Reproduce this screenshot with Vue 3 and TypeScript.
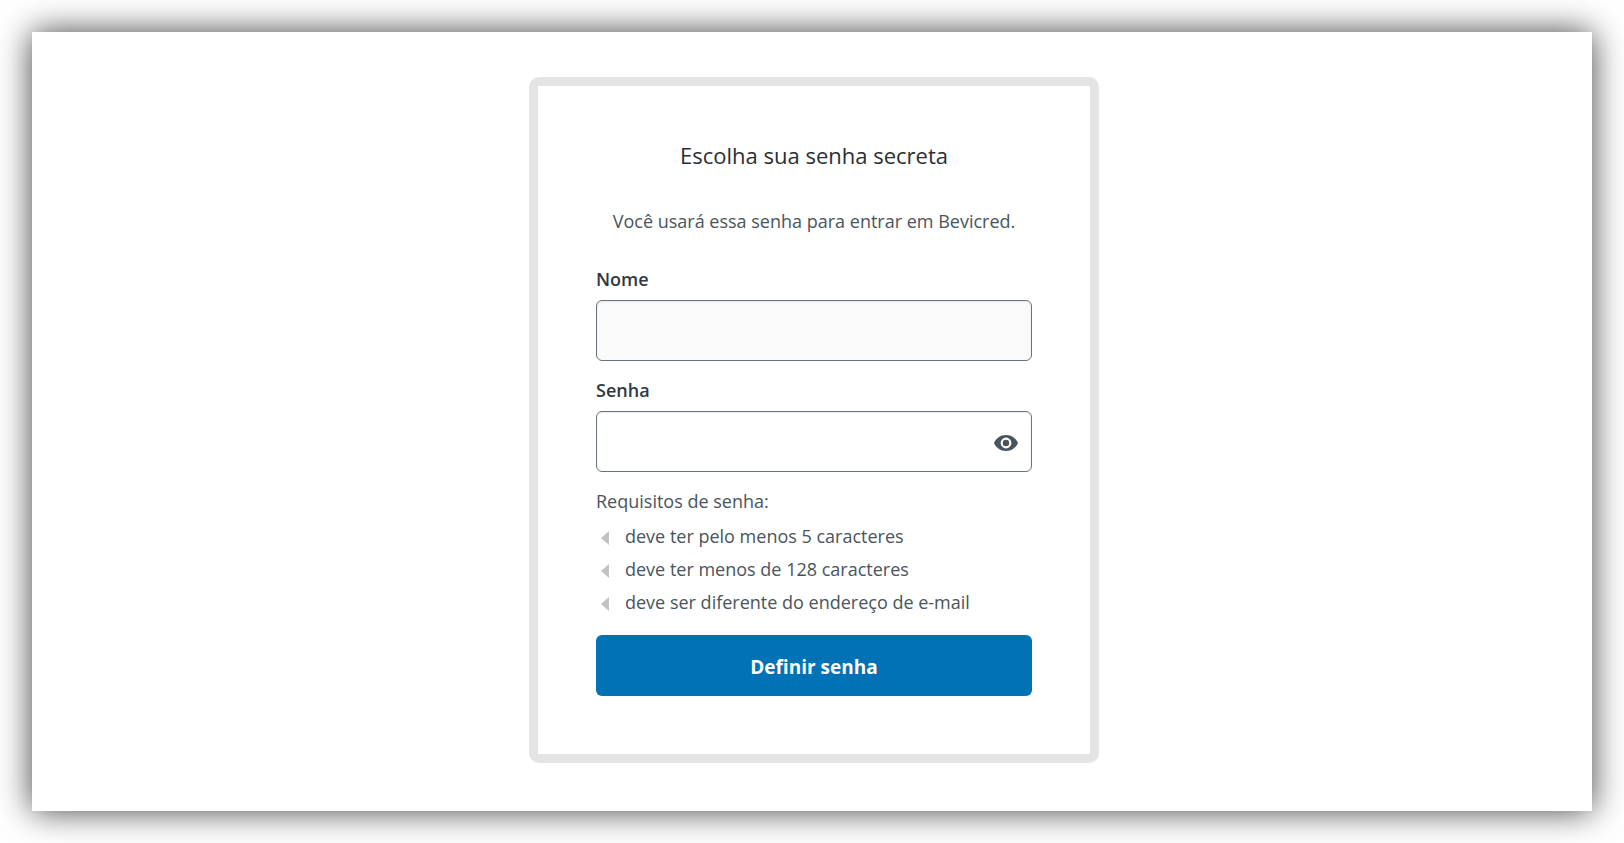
<script setup lang="ts">
import { ref } from 'vue'

const name = ref('')
const password = ref('')
const visible = ref(false)

const requirements: string[] = [
  'deve ter pelo menos 5 caracteres',
  'deve ter menos de 128 caracteres',
  'deve ser diferente do endereço de e-mail',
]
</script>

<template>
  <div class="page">
    <main class="panel">
      <form class="card" @submit.prevent>
        <h1 class="title">Escolha sua senha secreta</h1>
        <p class="intro">Você usará essa senha para entrar em Bevicred.</p>

        <div class="field">
          <label for="name">Nome</label>
          <input id="name" v-model="name" class="filled" type="text" autocomplete="name" />
        </div>

        <div class="field">
          <label for="password">Senha</label>
          <div class="control">
            <input
              id="password"
              v-model="password"
              :type="visible ? 'text' : 'password'"
              autocomplete="new-password"
            />
            <button class="toggle" type="button" aria-label="Mostrar senha" @click="visible = !visible">
              <svg viewBox="0 0 24 16" width="24" height="16" aria-hidden="true">
                <path
                  fill-rule="evenodd"
                  d="M12 0C6.5 0 1.9 3.3 0 8c1.9 4.7 6.5 8 12 8s10.1-3.3 12-8C22.1 3.3 17.5 0 12 0Zm0 13.400a5.400 5.400 0 1 1 0-10.800 5.400 5.400 0 0 1 0 10.800Zm0-8.600a3.200 3.200 0 1 0 0 6.400 3.200 3.200 0 0 0 0-6.400Z"
                />
              </svg>
            </button>
          </div>
        </div>

        <p class="rules-title">Requisitos de senha:</p>
        <ul class="rules">
          <li v-for="rule in requirements" :key="rule">
            <svg viewBox="0 0 8 14" width="8" height="14" aria-hidden="true"><path d="M8 0v14L0 7Z" /></svg>
            <span>{{ rule }}</span>
          </li>
        </ul>

        <button class="submit" type="submit">Definir senha</button>
      </form>
    </main>
  </div>
</template>

<style>
body {
  margin: 0;
  background: #fff;
}
</style>

<style scoped>
.page {
  box-sizing: border-box;
  min-height: 100vh;
  padding: 32px;
  display: flex;
  overflow: hidden;
  font-family: 'Segoe UI', 'Open Sans', 'Noto Sans', sans-serif;
  font-size: 18px;
  line-height: 28px;
  color: #49545c;
}
.panel {
  box-sizing: border-box;
  flex: 1;
  display: flex;
  justify-content: center;
  align-items: flex-start;
  padding: 45px 45px 48px 49px;
  background: #fff;
  box-shadow: 0 0 32px rgba(0, 0, 0, 0.75);
}
.card {
  box-sizing: border-box;
  width: 100%;
  max-width: 570px;
  padding: 48px 58px 58px;
  border: 9px solid #e4e4e4;
  border-radius: 10px;
}
.title {
  margin: 0 0 31px;
  font-size: 22px;
  font-weight: 400;
  line-height: 42px;
  text-align: center;
  color: #2b2e33;
}
.intro {
  margin: 0 0 30px;
  text-align: center;
}
.field {
  display: flex;
  flex-direction: column;
  gap: 7px;
  margin-bottom: 15px;
}
label {
  font-weight: 600;
  color: #2f3941;
}
.control {
  position: relative;
}
input {
  box-sizing: border-box;
  display: block;
  width: 100%;
  height: 61px;
  padding: 0 16px;
  border: 1px solid #68737d;
  border-radius: 6px;
  background: #fff;
  font: inherit;
  color: #2f3941;
  box-shadow: inset 0 1px 2px rgba(0, 0, 0, 0.08);
}
.filled {
  background: #fafafa;
}
.control input {
  padding-right: 56px;
}
.toggle {
  position: absolute;
  top: 0;
  right: 0;
  height: 100%;
  padding: 2px 14px 0;
  border: 0;
  background: none;
  cursor: pointer;
}
.toggle svg {
  display: block;
  fill: #49545c;
}
.rules-title {
  margin: 0 0 5px;
}
.rules {
  margin: 0 0 16px;
  padding: 0;
  list-style: none;
}
.rules li {
  display: flex;
  align-items: center;
  gap: 16px;
  padding-left: 5px;
  line-height: 33px;
}
.rules svg {
  margin-top: 3px;
  fill: #c2c2c2;
}
.submit {
  display: block;
  width: 100%;
  height: 61px;
  padding: 2px 0 0;
  border: 0;
  border-radius: 6px;
  background: #0072b5;
  color: #fff;
  font: inherit;
  font-size: 19px;
  font-weight: 700;
  cursor: pointer;
}
</style>
